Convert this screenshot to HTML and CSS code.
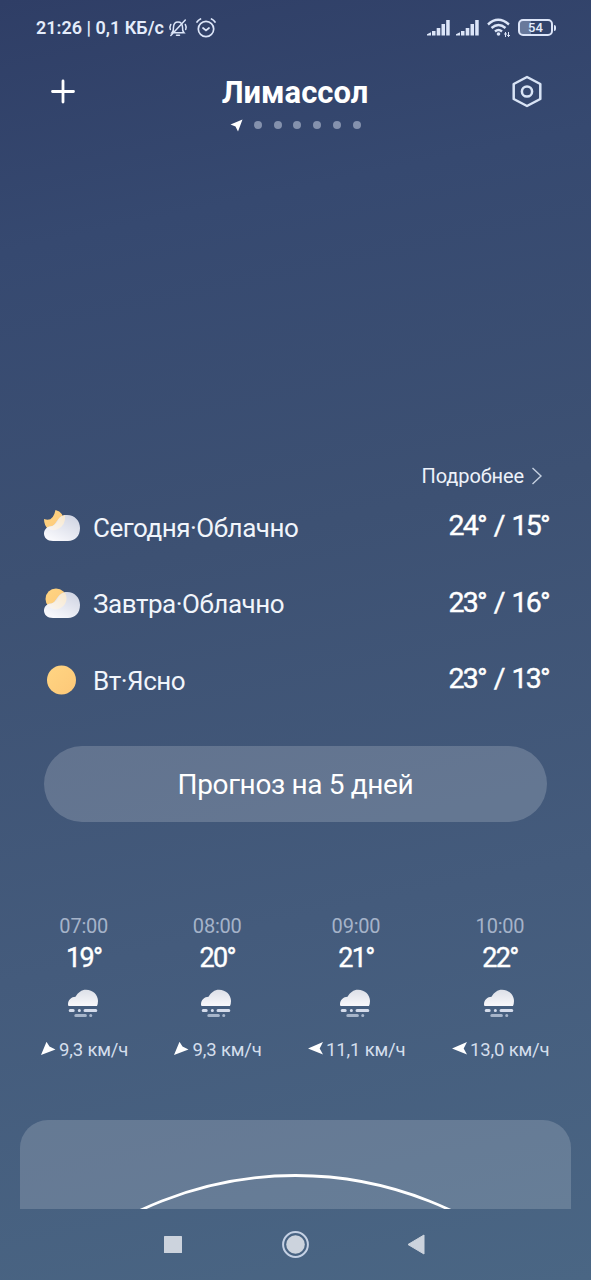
FILE: index.html
```html
<!DOCTYPE html>
<html lang="ru">
<head>
<meta charset="utf-8">
<title>Погода</title>
<link rel="stylesheet" href="styles.css">
</head>
<body>
<svg width="0" height="0" class="defs">
  <defs>
    <linearGradient id="cloud" x1="1" y1="0" x2="0.3" y2="1"><stop offset="0" stop-color="#ccd1e0"/><stop offset="1" stop-color="#f8f8fc"/></linearGradient>
    <linearGradient id="fogcloud" x1="0" y1="0" x2="0" y2="1"><stop offset="0" stop-color="#dde0e8"/><stop offset="1" stop-color="#f8f8fb"/></linearGradient>
    <linearGradient id="sun" x1="0" y1="0" x2="1" y2="1"><stop offset="0" stop-color="#ffd583"/><stop offset="1" stop-color="#fdc878"/></linearGradient>
    <linearGradient id="overlap" x1="1" y1="0" x2="0" y2="1"><stop offset="0" stop-color="#f8e8cc"/><stop offset="1" stop-color="#f8f5f4"/></linearGradient>
    <symbol id="fog" viewBox="0 0 32 29">
      <path d="M2 17Q1 17 1 15.500C1 11 4.500 7.800 8.500 7.800C11 3.500 14.500.8 19 .8C26 .8 31 6 31 12Q31 14.500 30 17Z" fill="url(#fogcloud)"/>
      <g stroke-linecap="round" stroke-width="3" fill="none"><path d="M3.200 21.400H6.200M12.300 21.400H12.400M18 21.400H28.800" stroke="#d5dceb"/><path d="M8.800 26.500H18.400M23.700 26.500H23.800" stroke="#a6b4c9"/></g>
    </symbol>
  </defs>
</svg>
<main class="phone">
  <div class="status">
    <span class="status-text">21:26 | 0,1 КБ/с</span>
    <svg class="bell" width="20" height="20" viewBox="0 0 20 20" fill="none" stroke="#dce5f8" stroke-width="1.500" stroke-linecap="round"><path d="M4 14.800Q5.800 12.800 5.500 9Q5.800 4 10 4Q14.200 4 14.500 9Q14.200 12.800 16 14.800ZM8.500 17.300H11.500M17.300 2L2.800 17.500M2.800 6.500Q1.200 9 2.300 11.500M17.300 6.500Q18.800 9 17.700 11.500"/></svg>
    <svg class="alarm" width="22" height="22" viewBox="0 0 22 22" fill="none" stroke="#dce5f8" stroke-width="1.700" stroke-linecap="round"><circle cx="11" cy="12" r="7.700"/><path d="M2 5Q3.300 3 5.500 2M20 5Q18.700 3 16.500 2M8 11L11 13.500L14 11"/></svg>
    <svg class="signal" width="24" height="18" viewBox="0 0 24 18" fill="#dce5f8"><path d="M0 16.500V15.300L4 13.300V16.500ZM5 12H8.500V16.500H5ZM9.700 9H13.300V16.500H9.700ZM14.500 5H18V16.500H14.500ZM19.200 1H22.700V16.500H19.200Z"/></svg>
    <svg class="signal second" width="24" height="18" viewBox="0 0 24 18" fill="#dce5f8"><path d="M0 16.500V15.300L4 13.300V16.500ZM5 12H8.500V16.500H5ZM9.700 9H13.300V16.500H9.700ZM14.500 5H18V16.500H14.500ZM19.200 1H22.700V16.500H19.200Z"/></svg>
    <svg class="wifi" width="24" height="20" viewBox="0 0 24 20" fill="none" stroke="#dce5f8" stroke-width="2.400"><path d="M1 6.500Q11 -2.800 22 6.500M4.500 10Q11.500 4 18.500 10M8 13.500Q11.500 10.500 15 13.500"/><circle cx="11.500" cy="16" r="1.800" fill="#dce5f8" stroke="none"/><path d="M18.500 14V19M21.500 14V19M17 16H20M20.200 17.500H23" stroke-width="1"/></svg>
    <div class="battery"><span>54</span></div><i class="battery-tip"></i>
  </div>

  <header class="header">
    <svg width="26" height="26" viewBox="0 0 26 26" stroke="#fff" stroke-width="2.800" stroke-linecap="round"><path d="M2.500 12.500H23.500M13 2V23"/></svg>
    <h1 class="city">Лимассол</h1>
    <svg width="32" height="34" viewBox="0 0 32 34" fill="none" stroke="#d8e3f5" stroke-width="2.500" stroke-linejoin="round"><path d="M16 2L29.300 9V24L16 31L2.700 24V9Z"/><circle cx="16" cy="16.500" r="5.100"/></svg>
  </header>
  <div class="pages">
    <svg width="13" height="13" viewBox="0 0 13 13"><path d="M12.500 .5L8 12.500L5.500 7.500L.5 5.500Z" fill="#fff"/></svg>
    <i></i><i></i><i></i><i></i><i></i><i></i>
  </div>

  <section class="forecast">
    <a class="more"><span>Подробнее</span><svg width="12" height="18" viewBox="0 0 12 18" fill="none" stroke="#c5d0e0" stroke-width="1.400"><path d="M1.500 1L10 9L1.500 17"/></svg></a>
    <div class="day">
      <svg class="icon" width="38" height="34" viewBox="0 0 38 34"><path d="M1 10Q10 13.500 12.500 1Q21 3 21.500 14Q17 25 5 20Q1 16 1 10Z" fill="url(#sun)"/><path d="M10 32C4 32 1 28.500 1 24.500C1 20 5 17 9 17C14 16 14 6 24 6C32 6 37 12 37 19C37 27 32 32 25 32Z" fill="url(#cloud)"/><path d="M4 18.500Q13 18 15.500 10Q18 6.500 22 6Q23 16 15 20Q9 23 4 18.500Z" fill="url(#overlap)"/></svg>
      <span class="name">Сегодня·Облачно</span><span class="temps">24° / 15°</span>
    </div>
    <div class="day">
      <svg class="icon" width="38" height="34" viewBox="0 0 38 34"><circle cx="13" cy="13" r="10.500" fill="url(#sun)"/><path d="M10 32C4 32 1 28.500 1 24.500C1 20 5 17.500 8 17.500C14 17 14 6 24 6C32 6 37 12 37 19C37 27 32 32 25 32Z" fill="url(#cloud)"/><path d="M4.300 18.700Q13 18 15.500 11Q18 7 22 6.500Q25 13 22 18Q17 25 10 23Q6 22 4.300 18.700Z" fill="url(#overlap)"/></svg>
      <span class="name">Завтра·Облачно</span><span class="temps">23° / 16°</span>
    </div>
    <div class="day">
      <svg class="icon" width="38" height="34" viewBox="0 0 38 34"><circle cx="18.500" cy="18" r="14.500" fill="url(#sun)"/></svg>
      <span class="name">Вт·Ясно</span><span class="temps">23° / 13°</span>
    </div>
  </section>
  <button class="forecast-button">Прогноз на 5 дней</button>

  <section class="hours">
    <div class="hour"><span class="time">07:00</span><span class="degree">19°</span><svg class="fog" width="32" height="29"><use href="#fog"/></svg><span class="wind"><svg width="16" height="16" viewBox="0 0 16 16"><path d="M0 13L5.500 -.2L8.500 4.500L14.500 7.500Z" fill="#fff"/></svg>9,3 км/ч</span></div>
    <div class="hour"><span class="time">08:00</span><span class="degree">20°</span><svg class="fog" width="32" height="29"><use href="#fog"/></svg><span class="wind"><svg width="16" height="16" viewBox="0 0 16 16"><path d="M0 13L5.500 -.2L8.500 4.500L14.500 7.500Z" fill="#fff"/></svg>9,3 км/ч</span></div>
    <div class="hour wide"><span class="time">09:00</span><span class="degree">21°</span><svg class="fog" width="32" height="29"><use href="#fog"/></svg><span class="wind"><svg width="16" height="16" viewBox="0 0 16 16"><path d="M0 6.500L15 0L11.700 6.500L15 12.500Z" fill="#fff"/></svg>11,1 км/ч</span></div>
    <div class="hour wide"><span class="time">10:00</span><span class="degree">22°</span><svg class="fog" width="32" height="29"><use href="#fog"/></svg><span class="wind"><svg width="16" height="16" viewBox="0 0 16 16"><path d="M0 6.500L15 0L11.700 6.500L15 12.500Z" fill="#fff"/></svg>13,0 км/ч</span></div>
  </section>

  <section class="sun-card"><svg width="551" height="89" viewBox="0 0 551 89"><circle cx="275.500" cy="418.500" r="363" fill="none" stroke="#fff" stroke-width="2.800"/></svg></section>
  <nav class="nav">
    <svg width="20" height="20" viewBox="0 0 20 20"><rect x="1" y="2" width="18" height="17" rx=".5" fill="#ccd3dd"/></svg>
    <svg width="28" height="28" viewBox="0 0 28 28"><circle cx="14.500" cy="14.500" r="12.400" fill="none" stroke="#c5d1e4" stroke-width="2"/><circle cx="14.500" cy="14.500" r="9.300" fill="#ccd3dd"/></svg>
    <svg width="20" height="22" viewBox="0 0 20 22"><path d="M1 11.500L17 2V21Z" fill="#ccd3dd" stroke="#ccd3dd" stroke-linejoin="round"/></svg>
  </nav>
</main>
</body>
</html>
```
FILE: styles.css
```css
* { box-sizing: border-box; }
body { margin: 0; font-family: Roboto, "Noto Sans", sans-serif; color: #fff; }
.defs { position: absolute; }
svg { display: block; flex: none; }
.phone {
  width: 591px; height: 1280px; overflow: hidden;
  display: flex; flex-direction: column;
  background: linear-gradient(168deg, #2f3e66 0%, #364970 18%, #3d5173 42%, #445b7c 70%, #4a6684 100%);
}
.status { height: 55px; padding-left: 36px; display: flex; align-items: center; color: #e4ecfb; }
.status-text { width: 129px; font-size: 18px; font-weight: 600; white-space: nowrap; }
.bell { margin-left: 3px; }
.alarm { margin-left: 7px; }
.signal { margin-left: 210px; }
.signal.second { margin-left: 5px; }
.wifi { margin-left: 7px; }
.battery {
  width: 35px; height: 17px; margin-left: 7px; border: 2px solid #dce5f8; border-radius: 5px;
  display: flex; align-items: center; justify-content: center;
  font-size: 13px; font-weight: 500; background: linear-gradient(90deg, #68799b 35%, transparent 35%);
}
.battery-tip { width: 2px; height: 6px; margin-left: 1px; background: #dce5f8; border-radius: 0 2px 2px 0; }
.header { height: 60px; padding: 13px 48px 0 50px; display: flex; align-items: center; justify-content: space-between; }
.city { margin: 3px 0 0 3px; font-size: 31px; line-height: 36px; font-weight: 700; }
.pages { height: 20px; margin-left: 230px; display: flex; align-items: center; gap: 11.800px; }
.pages i { width: 8px; height: 8px; border-radius: 50%; background: #8491ad; }
.pages svg { margin-right: -1px; }
.forecast { padding: 329px 44px 0; }
.more { height: 24px; display: flex; align-items: center; justify-content: flex-end; gap: 7px; padding-right: 4px; font-size: 20px; letter-spacing: -.1px; color: #edf2fa; }
.day { height: 76.500px; display: flex; align-items: center; }
.icon { margin: 0 12px 0 -1px; }
.name { font-size: 26px; line-height: 32px; letter-spacing: -.47px; color: #f1f5fb; margin-top: 3px; }
.temps { margin: -1px -2px 0 auto; font-size: 28.500px; -webkit-text-stroke: .4px #fff; letter-spacing: -1.750px; word-spacing: 2.500px; white-space: nowrap; }
.forecast-button {
  width: 503px; height: 76px; margin: 28px 0 0 44px; border: 0; border-radius: 38px; padding: 2px 0 0;
  background: rgba(255,255,255,.18); color: #fff; font: 400 28px Roboto, sans-serif; letter-spacing: -.35px;
}
.hours { height: 298px; padding: 90px 0 0 40.500px; display: flex; gap: 46px; }
.hour { width: 87.500px; display: flex; flex-direction: column; align-items: center; }
.hour.wide { width: 98px; }
.time { font-size: 20px; line-height: 28px; letter-spacing: -.2px; margin-left: -1px; color: #a5b3c9; }
.degree { font-size: 27px; line-height: 36px; -webkit-text-stroke: .4px #fff; letter-spacing: -1.600px; margin-left: -1px; }
.fog { margin: 13px 0 0 -3px; }
.wind { margin-top: 20px; width: 100%; display: flex; align-items: center; gap: 2.500px; font-size: 18.500px; letter-spacing: -.15px; line-height: 24px; color: #d4deec; white-space: nowrap; }
.sun-card { height: 89px; margin: 0 20px; border-radius: 28px 28px 0 0; overflow: hidden; background: rgba(255,255,255,.17); }
.nav { height: 71px; padding: 0 164px 0 163px; display: flex; align-items: center; justify-content: space-between; }
```
